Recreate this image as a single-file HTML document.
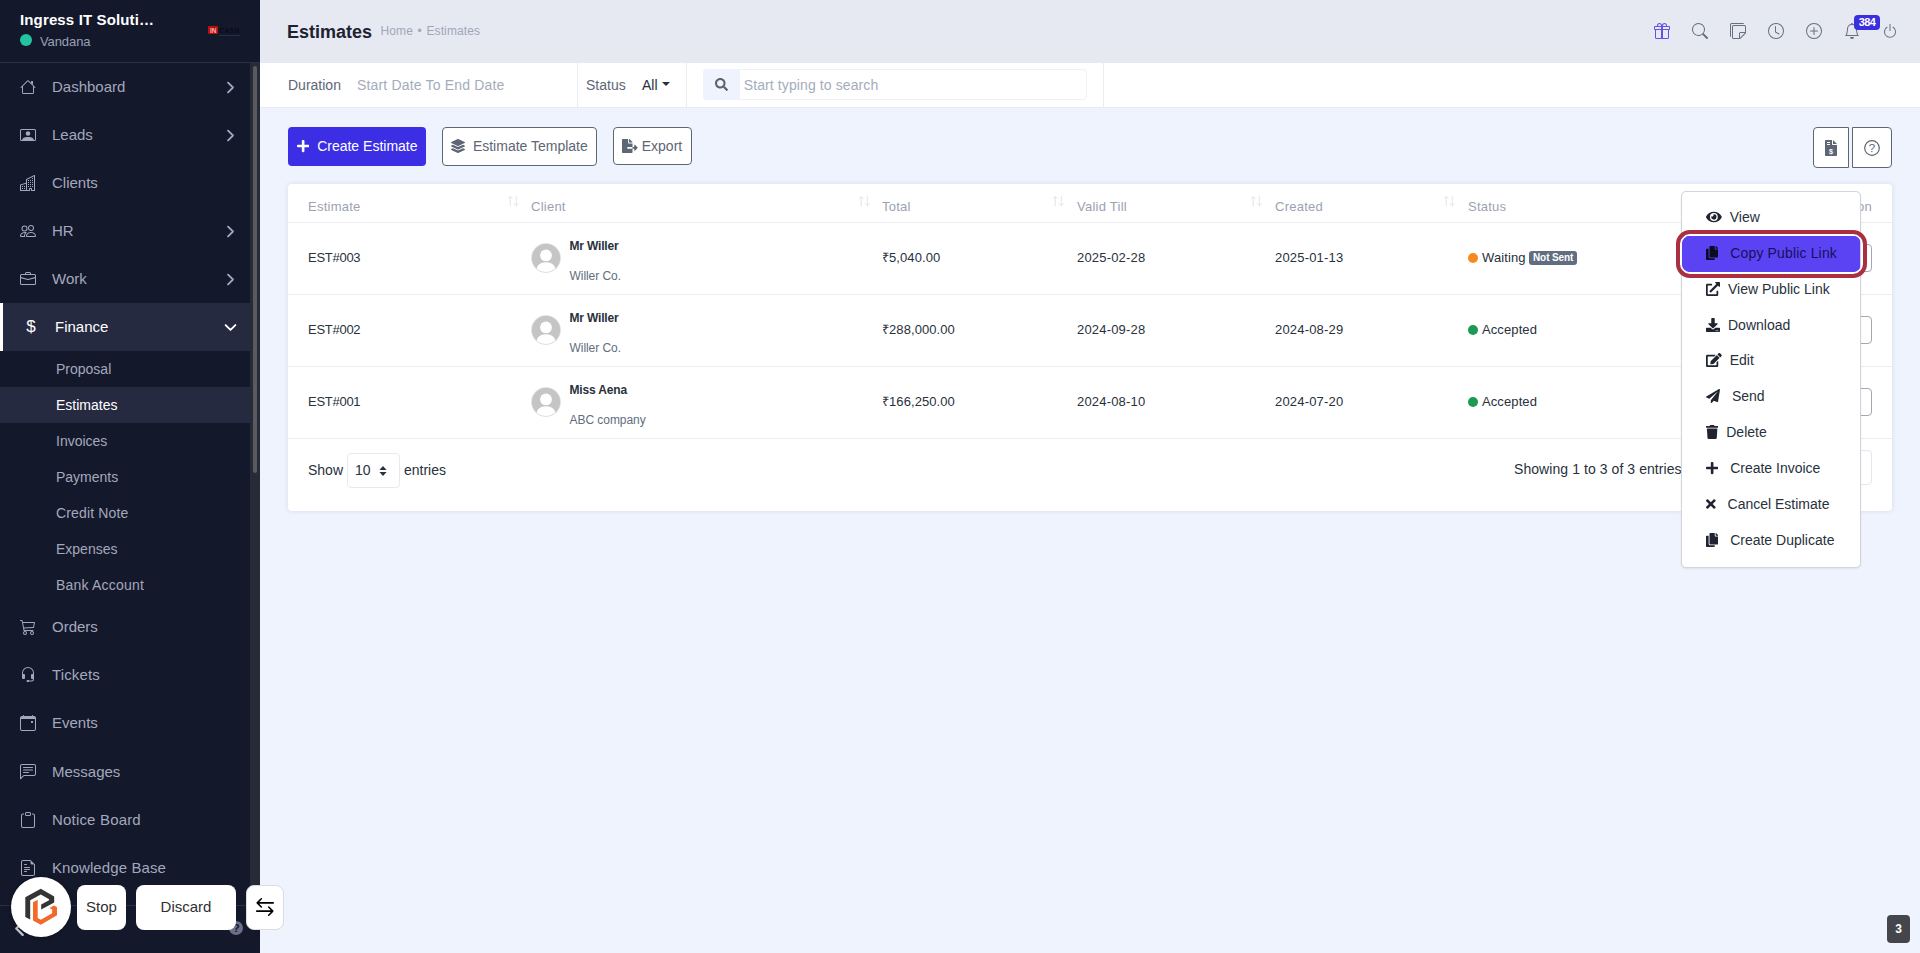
<!DOCTYPE html>
<html lang="en">
<head>
<meta charset="utf-8">
<title>Estimates</title>
<style>
*{box-sizing:border-box;margin:0;padding:0}
html,body{width:1920px;height:953px;overflow:hidden}
body{font-family:"Liberation Sans",Arial,sans-serif;font-size:14px;color:#28313c;background:#eef3fd;position:relative}
.abs{position:absolute}
svg{display:block}
/* ---------- sidebar ---------- */
#sidebar{position:absolute;left:0;top:0;width:260px;height:953px;background:#14182b;color:#a3a8bd}
#sb-head{position:absolute;left:0;top:0;width:260px;height:63px;border-bottom:1px solid #2b3042}
#sb-head .co{position:absolute;left:20px;top:9.6px;font-size:15px;font-weight:700;color:#fff;white-space:nowrap;line-height:20px;letter-spacing:.14px}
#sb-head .dot{position:absolute;left:20px;top:34px;width:12px;height:12px;border-radius:50%;background:#22c3a0}
#sb-head .us{position:absolute;left:40px;top:34px;font-size:13px;line-height:16px;color:#99a0b6;letter-spacing:-.1px}
#sb-head .logo{position:absolute;left:208px;top:24px;width:32px;height:12px;font-size:6px;font-weight:700;line-height:8px;white-space:nowrap}
#sb-head .logo b{position:absolute;left:.3px;top:1.500px;width:9.800px;height:8.800px;background:#b51111;color:#f3b3b3;text-align:center;font-size:6.500px;line-height:9px;border-radius:1px}
#sb-head .logo i{position:absolute;left:11.200px;top:2.500px;font-style:normal;color:#070a1a;letter-spacing:.5px;font-size:6.500px}
#sb-head .logo u{position:absolute;left:10.500px;top:10.800px;width:21.500px;height:1px;background:#292d43}
#sb-track{position:absolute;left:250px;top:63px;width:10px;height:842px;background:#272b38}
#sb-thumb{position:absolute;left:252.700px;top:66px;width:4.300px;height:407px;border-radius:3px;background:#5b5b5f}
.mi{position:absolute;left:0;width:250px;height:48px;font-size:15px;line-height:48px;color:#a3a8bd}
.mi .ic{position:absolute;left:20px;top:16px;width:16px;height:16px}
.mi .tx{position:absolute;left:52px;top:0;white-space:nowrap}
.mi .ch{position:absolute;left:223.5px;top:17.5px;width:13px;height:13px;stroke:currentColor;stroke-width:1.300px}
.mi.act{background:#262a41;color:#fff;border-left:3px solid #fff}
.mi.act .ic{left:20px}
.mi.act .tx{left:52px}
.mi.act .ch{left:220.5px}
.si{position:absolute;left:0;width:250px;height:36px;font-size:14px;line-height:36px;color:#a3a8bd;padding-left:56px;white-space:nowrap}
.si.act{background:#262a41;color:#fff}
#sb-foot{position:absolute;left:0;top:905px;width:260px;height:48px;border-top:1px solid #2b3042;background:#14182b}
.mi .dl{font-size:17px;line-height:16px;text-align:center;width:16px;left:20px !important;top:16px}
#sb-foot .fl{position:absolute;left:11px;top:14px;width:17px;height:17px;color:#c3c7d4;stroke:currentColor;stroke-width:1.2px}
#sb-foot .fq{position:absolute;left:229.300px;top:15.200px;width:14px;height:14px;border-radius:50%;background:#6b7086;color:#14182b;font-size:11px;font-weight:700;line-height:14px;text-align:center}
/* ---------- header ---------- */
#hdr{position:absolute;left:260px;top:0;width:1660px;height:63px;background:#e7e9f2}
#hdr h1{position:absolute;left:27px;top:20px;font-size:18px;line-height:24px;font-weight:700;color:#1d2230}
#hdr .bc{position:absolute;left:120.500px;top:23px;font-size:12px;line-height:16px;color:#a0a6b8;white-space:nowrap;word-spacing:1.200px;letter-spacing:.1px}
.hi{position:absolute;top:23px;width:16px;height:16px;color:#66707f}
#badge{position:absolute;left:1854px;top:15px;width:26px;height:15px;border-radius:4px;background:#3a2fe0;color:#fff;font-size:11px;font-weight:700;line-height:15px;text-align:center;letter-spacing:-.6px}
/* ---------- filter ---------- */
#flt{position:absolute;left:260px;top:63px;width:1660px;height:45px;background:#fff;border-bottom:1px solid #e8ebf1}
#flt .t{position:absolute;top:0;line-height:44px;font-size:14px;white-space:nowrap}
#flt .v{position:absolute;top:0;width:1px;height:44px;background:#eaedf3}
#srch{position:absolute;left:443px;top:6px;width:384px;height:31px;border:1px solid #f0f1f5;border-radius:4px;background:#fff}
#srch .a{position:absolute;left:-1px;top:-1px;width:37px;height:31px;background:#eef3fd;border-radius:4px 0 0 4px}
#srch .ph{position:absolute;left:39.800px;top:0;line-height:30px;font-size:14px;color:#a4acbb;white-space:nowrap;letter-spacing:.1px}
#flt .caret{position:absolute;top:19px;width:0;height:0;border-left:4px solid transparent;border-right:4px solid transparent;border-top:4px solid #28313c}
/* ---------- buttons ---------- */
.btn{position:absolute;height:39px;border-radius:4px;font-size:14px;line-height:39px;white-space:nowrap}
.btn-p{background:#3b2ee4;color:#fff}
.btn-s{background:#fff;border:1px solid #5d6675;color:#5d6675;line-height:37px}
/* ---------- table ---------- */
#card{position:absolute;left:288px;top:184px;width:1604px;height:327px;background:#fff;border-radius:4px;box-shadow:0 0 4px rgba(180,190,215,.45)}
.th{position:absolute;top:15px;font-size:13px;line-height:16px;color:#9ba2b2;white-space:nowrap;letter-spacing:.25px}
.so{position:absolute;top:10px;width:13px;height:14px;color:#dfe2e8;font-size:11px}
.hl{position:absolute;left:0;width:1604px;height:1px;background:#eceef2}
.td{position:absolute;font-size:13px;line-height:16px;color:#28313c;white-space:nowrap}
.av{position:absolute;left:243px;width:30px;height:30px;border-radius:50%;background:#c6c6c6;overflow:hidden;border:1px solid #e4e4e4}
.nm{position:absolute;left:281.500px;font-size:12px;font-weight:700;line-height:16px;color:#28313c;white-space:nowrap;letter-spacing:-.17px}
.cp{position:absolute;left:281.500px;font-size:12px;line-height:16px;color:#616e80;white-space:nowrap;letter-spacing:-.05px}
.sd{position:absolute;left:1180px;width:10px;height:10px;border-radius:50%}
.ab{position:absolute;left:1548px;width:36px;height:28px;border:1px solid #a3a7ae;border-radius:4px;background:#fff}
.ns{position:absolute;left:1241px;height:14px;padding:0 4px;border-radius:3px;background:#616e80;color:#fff;font-size:10px;font-weight:700;line-height:14px;white-space:nowrap;letter-spacing:-.1px}
.ab i{position:absolute;left:21px;width:3px;height:3px;border-radius:50%;background:#616e80}
.ab i:nth-child(1){top:7px}.ab i:nth-child(2){top:11.600px}.ab i:nth-child(3){top:16.200px}
.ft{position:absolute;top:276px;font-size:14px;line-height:20px;color:#28313c;white-space:nowrap}
.sel{position:absolute;left:59px;top:269px;width:53px;height:35px;border:1px solid #e8eaef;border-radius:4px;background:#fff}
.sel span{position:absolute;left:7px;top:0;line-height:33px;font-size:14px;color:#28313c}
.sel svg{position:absolute;left:31px;top:11.500px;width:8px;height:10px}
.pg{position:absolute;left:1500px;top:266px;width:84px;height:35px;border:1px solid #e4e7ec;border-radius:4px;background:#fff}
/* ---------- dropdown ---------- */
#dd{position:absolute;left:1680.500px;top:191px;width:180.300px;height:377.200px;background:#fff;border:1px solid #d2d4da;border-radius:5px;box-shadow:0 1px 2px rgba(60,70,100,.10)}
.di{position:absolute;left:0;width:178px;height:36px;padding-left:24.500px;font-size:14px;line-height:36px;color:#28313c;white-space:nowrap}
.di svg{display:inline-block;height:14px;margin-right:8px;vertical-align:-2px;fill:#1f2430}
.di.hot{color:#17105c;letter-spacing:.15px}
.hotbg{position:absolute;left:0;top:44.300px;width:178.300px;height:35.500px;background:#5b43f3}
.hotring{position:absolute;left:-5.500px;top:38px;width:190.500px;height:47.600px;border:4px solid #a92f41;border-radius:14px;box-shadow:inset 0 0 0 1.800px #fff}
.di.hot svg{fill:#0c0b22}
/* ---------- overlay ---------- */
.ov{position:absolute;background:#fff;border-radius:8px;font-size:15px;color:#2f2f33;text-align:center;line-height:43px;height:45px;top:885px}
#fab{position:absolute;left:11px;top:877px;width:60px;height:60px;border-radius:50%;background:#fff;box-shadow:0 0 4px rgba(0,0,0,.4)}
#cnt{position:absolute;left:1887px;top:915px;width:23px;height:28px;border-radius:4px;background:#45464b;color:#fff;font-size:12px;font-weight:700;line-height:28px;text-align:center}
</style>
</head>
<body>
<!--MAIN-->
<div id="hdr"><h1>Estimates</h1><div class="bc">Home • Estimates</div></div>
<svg class="hi" style="left:1654px;color:#6a4fe3" viewBox="0 0 16 16" fill="currentColor"><path d="M3 2.500a2.500 2.500 0 0 1 5 0 2.500 2.500 0 0 1 5 0v.006c0 .070 0 .270-.038.494H15a1 1 0 0 1 1 1v2a1 1 0 0 1-1 1v7.500a1.500 1.500 0 0 1-1.500 1.500h-11A1.500 1.500 0 0 1 1 14.500V7a1 1 0 0 1-1-1V4a1 1 0 0 1 1-1h2.038A2.968 2.968 0 0 1 3 2.506V2.500zm1.068.500H7v-.500a1.500 1.500 0 1 0-3 0c0 .085.002.274.045.430a.522.522 0 0 0 .023.070zM9 3h2.932a.560.560 0 0 0 .023-.070c.043-.156.045-.345.045-.430a1.500 1.500 0 0 0-3 0V3zM1 4v2h6V4H1zm8 0v2h6V4H9zm5 3H9v8h4.500a.500.500 0 0 0 .500-.500V7zm-7 8V7H2v7.500a.500.500 0 0 0 .500.500H7z"/></svg>
<svg class="hi" style="left:1692px;" viewBox="0 0 16 16" fill="currentColor"><path d="M11.742 10.344a6.500 6.500 0 1 0-1.397 1.398h-.001c.030.040.062.078.098.115l3.850 3.850a1 1 0 0 0 1.415-1.414l-3.850-3.850a1.007 1.007 0 0 0-.115-.100zM12 6.500a5.500 5.500 0 1 1-11 0 5.500 5.500 0 0 1 11 0z"/></svg>
<svg class="hi" style="left:1730px;" viewBox="0 0 16 16" fill="currentColor"><path d="M1.500 0A1.500 1.500 0 0 0 0 1.500V13a1 1 0 0 0 1 1V1.500a.500.500 0 0 1 .500-.500H14a1 1 0 0 0-1-1H1.500z"/><path d="M3.500 2A1.500 1.500 0 0 0 2 3.500v11A1.500 1.500 0 0 0 3.500 16h6.086a1.500 1.500 0 0 0 1.060-.440l4.915-4.914A1.500 1.500 0 0 0 16 9.586V3.500A1.500 1.500 0 0 0 14.500 2h-11zM3 3.500a.500.500 0 0 1 .500-.500h11a.500.500 0 0 1 .500.500V9h-4.500A1.500 1.500 0 0 0 9 10.500V15H3.500a.500.500 0 0 1-.500-.500v-11zm7 11.293V10.500a.500.500 0 0 1 .500-.500h4.293L10 14.793z"/></svg>
<svg class="hi" style="left:1768px;" viewBox="0 0 16 16" fill="currentColor"><path d="M8 3.500a.500.500 0 0 0-1 0V9a.500.500 0 0 0 .252.434l3.500 2a.500.500 0 0 0 .496-.868L8 8.710V3.500z"/><path d="M8 16A8 8 0 1 0 8 0a8 8 0 0 0 0 16zm7-8A7 7 0 1 1 1 8a7 7 0 0 1 14 0z"/></svg>
<svg class="hi" style="left:1806px;" viewBox="0 0 16 16" fill="currentColor"><path d="M8 15A7 7 0 1 1 8 1a7 7 0 0 1 0 14zm0 1A8 8 0 1 0 8 0a8 8 0 0 0 0 16z"/><path d="M8 4a.500.500 0 0 1 .500.500v3h3a.500.500 0 0 1 0 1h-3v3a.500.500 0 0 1-1 0v-3h-3a.500.500 0 0 1 0-1h3v-3A.500.500 0 0 1 8 4z"/></svg>
<svg class="hi" style="left:1844px;" viewBox="0 0 16 16" fill="currentColor"><path d="M8 16a2 2 0 0 0 2-2H6a2 2 0 0 0 2 2zM8 1.918l-.797.161A4.002 4.002 0 0 0 4 6c0 .628-.134 2.197-.459 3.742-.160.767-.376 1.566-.663 2.258h10.244c-.287-.692-.502-1.490-.663-2.258C12.134 8.197 12 6.628 12 6a4.002 4.002 0 0 0-3.203-3.920L8 1.917zM14.220 12c.223.447.481.801.780 1H1c.299-.199.557-.553.780-1C2.680 10.200 3 6.880 3 6c0-2.420 1.720-4.440 4.005-4.901a1 1 0 1 1 1.990 0A5.002 5.002 0 0 1 13 6c0 .880.320 4.200 1.220 6z"/></svg>
<svg class="hi" style="left:1882px;" viewBox="0 0 16 16" fill="currentColor"><path d="M7.500 1v7h1V1h-1z"/><path d="M3 8.812a4.999 4.999 0 0 1 2.578-4.375l-.485-.874A6 6 0 1 0 11 3.616l-.501.865A5 5 0 1 1 3 8.812z"/></svg>
<div id="badge">384</div>
<div id="flt">
<span class="t" style="left:28px;color:#5d6675">Duration</span>
<span class="t" style="left:97px;color:#a4acbb;letter-spacing:.17px">Start Date To End Date</span>
<i class="v" style="left:317px"></i>
<span class="t" style="left:326px;color:#5d6675">Status</span>
<span class="t" style="left:382px;color:#28313c">All</span>
<i class="caret" style="left:402px"></i>
<i class="v" style="left:426px"></i>
<div id="srch"><div class="a"><svg viewBox="0 0 512 512" style="width:13.000px;height:13px;position:absolute;left:12px;top:9px;color:#596173" fill="currentColor"><path d="M505 442.700L405.300 343c-4.500-4.500-10.600-7-17-7H372c27.600-35.300 44-79.700 44-128C416 93.100 322.900 0 208 0S0 93.100 0 208s93.100 208 208 208c48.300 0 92.700-16.400 128-44v16.300c0 6.400 2.500 12.500 7 17l99.700 99.700c9.400 9.400 24.600 9.400 33.900 0l28.300-28.300c9.400-9.400 9.400-24.600.100-34zM208 336c-70.700 0-128-57.200-128-128 0-70.700 57.200-128 128-128 70.700 0 128 57.200 128 128 0 70.700-57.200 128-128 128z"/></svg></div><span class="ph">Start typing to search</span></div>
<i class="v" style="left:843px"></i>
</div>
<div class="btn btn-p" style="left:288px;top:127px;width:138px;padding-left:9px"><svg viewBox="0 0 448 512" style="width:12.250px;height:14px;display:inline-block;vertical-align:-2px;margin-right:4px" fill="currentColor"><path d="M416 208H272V64c0-17.670-14.330-32-32-32h-32c-17.670 0-32 14.330-32 32v144H32c-17.670 0-32 14.330-32 32v32c0 17.670 14.330 32 32 32h144v144c0 17.670 14.330 32 32 32h32c17.670 0 32-14.330 32-32V304h144c17.670 0 32-14.330 32-32v-32c0-17.670-14.330-32-32-32z"/></svg> Create Estimate</div>
<div class="btn btn-s" style="left:442px;top:127px;width:155px;padding-left:8px"><svg viewBox="0 0 512 512" style="width:14.000px;height:14px;display:inline-block;vertical-align:-2px;margin-right:4px" fill="currentColor"><path d="M12.410 148.020l232.940 105.670c6.800 3.090 14.490 3.090 21.290 0l232.940-105.670c16.550-7.510 16.550-32.520 0-40.030L266.650 2.310a25.607 25.607 0 0 0-21.290 0L12.410 107.980c-16.550 7.510-16.550 32.530 0 40.040zm487.180 88.280l-58.090-26.330-161.640 73.270c-7.560 3.430-15.590 5.170-23.860 5.170s-16.290-1.740-23.860-5.170L70.510 209.970l-58.100 26.330c-16.550 7.500-16.550 32.500 0 40l232.940 105.590c6.800 3.080 14.490 3.080 21.290 0L499.590 276.300c16.550-7.500 16.550-32.500 0-40zm0 127.800l-57.870-26.230-161.860 73.370c-7.560 3.430-15.590 5.170-23.860 5.170s-16.290-1.740-23.860-5.170L70.290 337.870 12.410 364.100c-16.550 7.500-16.550 32.500 0 40l232.940 105.590c6.800 3.080 14.490 3.080 21.290 0L499.590 404.100c16.550-7.500 16.550-32.500 0-40z"/></svg> Estimate Template</div>
<div class="btn btn-s" style="left:613px;top:127px;width:79px;height:38px;line-height:36px;padding-left:8px"><svg viewBox="0 0 576 512" style="width:15.750px;height:14px;display:inline-block;vertical-align:-2px;margin-right:4px" fill="currentColor"><path d="M384 121.900c0-6.300-2.500-12.400-7-16.900L279.100 7c-4.500-4.500-10.600-7-17-7H256v128h128zM571 308l-95.700-96.400c-10.100-10.100-27.400-3-27.400 11.300V288h-64v64h64v65.200c0 14.300 17.300 21.400 27.400 11.300L571 332c6.600-6.600 6.600-17.400 0-24zm-379 28v-32c0-8.800 7.200-16 16-16h176V160H248c-13.200 0-24-10.800-24-24V0H24C10.700 0 0 10.700 0 24v464c0 13.300 10.700 24 24 24h336c13.300 0 24-10.700 24-24V352H208c-8.800 0-16-7.200-16-16z"/></svg>Export</div>
<div class="btn btn-s" style="left:1813px;top:127px;width:36px;height:41px;border-radius:4px 0 0 4px"><svg viewBox="0 0 384 512" style="position:absolute;left:11px;top:12px;width:12px;height:16px" fill="currentColor"><path fill-rule="evenodd" d="M224 0H24C10.700 0 0 10.700 0 24v464c0 13.300 10.700 24 24 24h336c13.300 0 24-10.700 24-24V160H248c-13.200 0-24-10.800-24-24V0zM64 72c0-4.400 3.600-8 8-8h80c4.400 0 8 3.600 8 8v16c0 4.400-3.600 8-8 8H72c-4.400 0-8-3.600-8-8V72zm0 64c0-4.400 3.600-8 8-8h80c4.400 0 8 3.600 8 8v16c0 4.400-3.600 8-8 8H72c-4.400 0-8-3.600-8-8v-16zM256 0v128h128L256 0z"/><text x="192" y="440" font-size="230" font-weight="700" text-anchor="middle" fill="#fff" font-family="Liberation Sans,sans-serif">$</text></svg></div>
<div class="btn btn-s" style="left:1852px;top:127px;width:40px;height:41px;border-radius:0 4px 4px 0"><svg viewBox="0 0 16 16" style="position:absolute;left:11px;top:12px;width:16px;height:16px"><circle cx="8" cy="8" r="7.300" fill="none" stroke="currentColor" stroke-width="1.200"/><text x="8" y="12" font-size="11.500" font-weight="400" text-anchor="middle" fill="currentColor" font-family="Liberation Sans,sans-serif">?</text></svg></div>
<div id="card">
<span class="th" style="left:20px">Estimate</span>
<svg class="so" style="left:219px" viewBox="0 0 14 13" fill="none" stroke="currentColor" stroke-width="1"><path d="M3.500 12V1.500M1 4l2.500-2.500L6 4M10 1v10.500M7.500 9l2.500 2.500L12.500 9"/></svg>
<span class="th" style="left:243px">Client</span>
<svg class="so" style="left:570px" viewBox="0 0 14 13" fill="none" stroke="currentColor" stroke-width="1"><path d="M3.500 12V1.500M1 4l2.500-2.500L6 4M10 1v10.500M7.500 9l2.500 2.500L12.500 9"/></svg>
<span class="th" style="left:594px">Total</span>
<svg class="so" style="left:764px" viewBox="0 0 14 13" fill="none" stroke="currentColor" stroke-width="1"><path d="M3.500 12V1.500M1 4l2.500-2.500L6 4M10 1v10.500M7.500 9l2.500 2.500L12.500 9"/></svg>
<span class="th" style="left:789px">Valid Till</span>
<svg class="so" style="left:962px" viewBox="0 0 14 13" fill="none" stroke="currentColor" stroke-width="1"><path d="M3.500 12V1.500M1 4l2.500-2.500L6 4M10 1v10.500M7.500 9l2.500 2.500L12.500 9"/></svg>
<span class="th" style="left:987px">Created</span>
<svg class="so" style="left:1155px" viewBox="0 0 14 13" fill="none" stroke="currentColor" stroke-width="1"><path d="M3.500 12V1.500M1 4l2.500-2.500L6 4M10 1v10.500M7.500 9l2.500 2.500L12.500 9"/></svg>
<span class="th" style="left:1180px">Status</span>
<span class="th" style="right:20px">Action</span>
<i class="hl" style="top:38px"></i>
<i class="hl" style="top:110px"></i>
<i class="hl" style="top:182px"></i>
<i class="hl" style="top:254px"></i>
<span class="td" style="left:20px;top:66px;letter-spacing:-.27px">EST#003</span>
<div class="av" style="top:59px"><svg viewBox="0 0 30 30" width="28" height="28"><rect width="30" height="30" fill="#c5c5c5"/><circle cx="15" cy="12.300" r="6.300" fill="#fff"/><path d="M4.500 30c0-7.500 4.500-10.500 10.500-10.500S25.500 22.500 25.500 30z" fill="#fff"/></svg></div>
<span class="nm" style="top:54px">Mr Willer</span>
<span class="cp" style="top:84px">Willer Co.</span>
<span class="td" style="left:594px;top:66px;letter-spacing:.07px">₹5,040.00</span>
<span class="td" style="left:789px;top:66px;letter-spacing:.18px">2025-02-28</span>
<span class="td" style="left:987px;top:66px;letter-spacing:.18px">2025-01-13</span>
<i class="sd" style="top:68.5px;background:#f58a1f"></i>
<span class="td" style="left:1194px;top:66px;letter-spacing:.1px">Waiting</span>
<span class="ns" style="top:67px">Not Sent</span>
<div class="ab" style="top:60.3px"><i></i><i></i><i></i></div>
<span class="td" style="left:20px;top:138px;letter-spacing:-.27px">EST#002</span>
<div class="av" style="top:131px"><svg viewBox="0 0 30 30" width="28" height="28"><rect width="30" height="30" fill="#c5c5c5"/><circle cx="15" cy="12.300" r="6.300" fill="#fff"/><path d="M4.500 30c0-7.500 4.500-10.500 10.500-10.500S25.500 22.500 25.500 30z" fill="#fff"/></svg></div>
<span class="nm" style="top:126px">Mr Willer</span>
<span class="cp" style="top:156px">Willer Co.</span>
<span class="td" style="left:594px;top:138px;letter-spacing:.07px">₹288,000.00</span>
<span class="td" style="left:789px;top:138px;letter-spacing:.18px">2024-09-28</span>
<span class="td" style="left:987px;top:138px;letter-spacing:.18px">2024-08-29</span>
<i class="sd" style="top:140.5px;background:#1a9b51"></i>
<span class="td" style="left:1194px;top:138px;letter-spacing:.1px">Accepted</span>
<div class="ab" style="top:132.3px"><i></i><i></i><i></i></div>
<span class="td" style="left:20px;top:210px;letter-spacing:-.27px">EST#001</span>
<div class="av" style="top:203px"><svg viewBox="0 0 30 30" width="28" height="28"><rect width="30" height="30" fill="#c5c5c5"/><circle cx="15" cy="12.300" r="6.300" fill="#fff"/><path d="M4.500 30c0-7.500 4.500-10.500 10.500-10.500S25.500 22.500 25.500 30z" fill="#fff"/></svg></div>
<span class="nm" style="top:198px">Miss Aena</span>
<span class="cp" style="top:228px">ABC company</span>
<span class="td" style="left:594px;top:210px;letter-spacing:.07px">₹166,250.00</span>
<span class="td" style="left:789px;top:210px;letter-spacing:.18px">2024-08-10</span>
<span class="td" style="left:987px;top:210px;letter-spacing:.18px">2024-07-20</span>
<i class="sd" style="top:212.5px;background:#1a9b51"></i>
<span class="td" style="left:1194px;top:210px;letter-spacing:.1px">Accepted</span>
<div class="ab" style="top:204.3px"><i></i><i></i><i></i></div>
<span class="ft" style="left:20px">Show</span><div class="sel"><span>10</span><svg viewBox="0 0 8 10" fill="#28313c"><path d="M4 0l3.600 4H.400zM4 10L.400 6h7.200z"/></svg></div><span class="ft" style="left:116px">entries</span>
<span class="ft" style="left:1226px;letter-spacing:.07px;top:275px">Showing 1 to 3 of 3 entries</span>
<div class="pg"></div>
</div>
<!--SIDEBAR-->
<div id="sidebar">
<div id="sb-head"><div class="co">Ingress IT Soluti…</div><div class="dot"></div><div class="us">Vandana</div><div class="logo"><b>IN</b><i>CASH</i><u></u></div></div>
<div id="sb-track"></div><div id="sb-thumb"></div>
<div class="mi" style="top:63px"><svg class="ic" viewBox="0 0 16 16" fill="currentColor" ><path fill-rule="evenodd" d="M2 13.5V7h1v6.5a.5.5 0 0 0 .5.5h9a.5.5 0 0 0 .5-.5V7h1v6.5a1.5 1.5 0 0 1-1.5 1.5h-9A1.5 1.5 0 0 1 2 13.5zm11-11V6l-2-2V2.5a.5.5 0 0 1 .5-.5h1a.5.5 0 0 1 .5.5z"/><path fill-rule="evenodd" d="M7.293 1.5a1 1 0 0 1 1.414 0l6.647 6.646a.5.5 0 0 1-.708.708L8 2.207 1.354 8.854a.5.5 0 1 1-.708-.708L7.293 1.5z"/></svg><span class="tx">Dashboard</span><svg class="ch" viewBox="0 0 16 16" fill="currentColor" ><path fill-rule="evenodd" d="M4.646 1.646a.5.500 0 0 1 .708 0l6 6a.5.500 0 0 1 0 .708l-6 6a.5.500 0 0 1-.708-.708L10.293 8 4.646 2.354a.5.500 0 0 1 0-.708z"/></svg></div>
<div class="mi" style="top:111px"><svg class="ic" viewBox="0 0 16 16" fill="currentColor" ><path d="M1.5 2A1.5 1.5 0 0 0 0 3.5v9A1.5 1.5 0 0 0 1.5 14h13a1.5 1.5 0 0 0 1.500-1.5v-9A1.5 1.5 0 0 0 14.500 2h-13zM1 3.500a.5.500 0 0 1 .5-.5h13a.5.500 0 0 1 .5.500v9a.5.500 0 0 1-.5.500h-.6c-.3-1.700-2.100-3-4.900-3h-2c-2.800 0-4.600 1.300-4.900 3H1.500a.5.500 0 0 1-.5-.5v-9z"/><circle cx="8" cy="6.500" r="2.300"/></svg><span class="tx">Leads</span><svg class="ch" viewBox="0 0 16 16" fill="currentColor" ><path fill-rule="evenodd" d="M4.646 1.646a.5.500 0 0 1 .708 0l6 6a.5.500 0 0 1 0 .708l-6 6a.5.500 0 0 1-.708-.708L10.293 8 4.646 2.354a.5.500 0 0 1 0-.708z"/></svg></div>
<div class="mi" style="top:159px"><svg class="ic" viewBox="0 0 16 16" fill="currentColor" ><path fill-rule="evenodd" d="M14.763.075A.5.5 0 0 1 15 .5v15a.5.5 0 0 1-.5.5h-3a.5.5 0 0 1-.5-.5V14h-1v1.500a.5.5 0 0 1-.5.5h-9a.5.5 0 0 1-.5-.5V10a.5.5 0 0 1 .342-.474L6 7.640V4.500a.5.5 0 0 1 .276-.447l8-4a.5.5 0 0 1 .487.022zM6 8.694 1 10.360V15h5V8.694zM7 15h2v-1.500a.5.5 0 0 1 .5-.5h2a.5.5 0 0 1 .5.500V15h2V1.309l-7 3.500V15z"/><path d="M2 11h1v1H2v-1zm2 0h1v1H4v-1zm-2 2h1v1H2v-1zm2 0h1v1H4v-1zm4-4h1v1H8V9zm2 0h1v1h-1V9zm-2 2h1v1H8v-1zm2 0h1v1h-1v-1zm2-2h1v1h-1V9zm0 2h1v1h-1v-1zM8 7h1v1H8V7zm2 0h1v1h-1V7zm2 0h1v1h-1V7zM8 5h1v1H8V5zm2 0h1v1h-1V5zm2 0h1v1h-1V5zm0-2h1v1h-1V3z"/></svg><span class="tx">Clients</span></div>
<div class="mi" style="top:207px"><svg class="ic" viewBox="0 0 16 16" fill="currentColor" ><path d="M15 14s1 0 1-1-1-4-5-4-5 3-5 4 1 1 1 1h8zm-7.978-1A.261.261 0 0 1 7 12.996c.001-.264.167-1.030.760-1.720C8.312 10.629 9.282 10 11 10c1.717 0 2.687.630 3.240 1.276.593.690.758 1.457.760 1.720l-.008.002a.274.274 0 0 1-.014.002H7.022zM11 7a2 2 0 1 0 0-4 2 2 0 0 0 0 4zm3-2a3 3 0 1 1-6 0 3 3 0 0 1 6 0zM6.936 9.280a5.880 5.880 0 0 0-1.230-.247A7.350 7.350 0 0 0 5 9c-4 0-5 3-5 4 0 .667.333 1 1 1h4.216A2.238 2.238 0 0 1 5 13c0-1.010.377-2.042 1.090-2.904.243-.294.526-.569.846-.816zM4.920 10A5.493 5.493 0 0 0 4 13H1c0-.260.164-1.030.760-1.724.545-.636 1.492-1.256 3.160-1.275zM1.500 5.500a3 3 0 1 1 6 0 3 3 0 0 1-6 0zm3-2a2 2 0 1 0 0 4 2 2 0 0 0 0-4z"/></svg><span class="tx">HR</span><svg class="ch" viewBox="0 0 16 16" fill="currentColor" ><path fill-rule="evenodd" d="M4.646 1.646a.5.500 0 0 1 .708 0l6 6a.5.500 0 0 1 0 .708l-6 6a.5.500 0 0 1-.708-.708L10.293 8 4.646 2.354a.5.500 0 0 1 0-.708z"/></svg></div>
<div class="mi" style="top:255px"><svg class="ic" viewBox="0 0 16 16" fill="currentColor" ><path d="M6.500 1A1.500 1.500 0 0 0 5 2.500V3H1.500A1.500 1.500 0 0 0 0 4.500v8A1.500 1.500 0 0 0 1.500 14h13a1.500 1.500 0 0 0 1.500-1.500v-8A1.500 1.500 0 0 0 14.500 3H11v-.5A1.500 1.500 0 0 0 9.500 1h-3zm0 1h3a.5.500 0 0 1 .5.500V3H6v-.5a.5.500 0 0 1 .5-.5zm1.886 6.914L15 7.151V12.500a.5.500 0 0 1-.5.500h-13a.5.500 0 0 1-.5-.5V7.150l6.614 1.764a1.500 1.500 0 0 0 .772 0zM1.500 4h13a.5.500 0 0 1 .5.500v1.616L8.129 7.948a.5.500 0 0 1-.258 0L1 6.116V4.500a.5.500 0 0 1 .5-.5z"/></svg><span class="tx">Work</span><svg class="ch" viewBox="0 0 16 16" fill="currentColor" ><path fill-rule="evenodd" d="M4.646 1.646a.5.500 0 0 1 .708 0l6 6a.5.500 0 0 1 0 .708l-6 6a.5.500 0 0 1-.708-.708L10.293 8 4.646 2.354a.5.500 0 0 1 0-.708z"/></svg></div>
<div class="mi act" style="top:303px"><span class="ic dl">$</span><span class="tx">Finance</span><svg class="ch" viewBox="0 0 16 16" fill="currentColor" ><path fill-rule="evenodd" d="M1.646 4.646a.5.500 0 0 1 .708 0L8 10.293l5.646-5.647a.5.500 0 0 1 .708.708l-6 6a.5.500 0 0 1-.708 0l-6-6a.5.500 0 0 1 0-.708z"/></svg></div>
<div class="si" style="top:351px;letter-spacing:0px">Proposal</div>
<div class="si act" style="top:387px;letter-spacing:0px">Estimates</div>
<div class="si" style="top:423px;letter-spacing:0px">Invoices</div>
<div class="si" style="top:459px;letter-spacing:0px">Payments</div>
<div class="si" style="top:495px;letter-spacing:0.15px">Credit Note</div>
<div class="si" style="top:531px;letter-spacing:0px">Expenses</div>
<div class="si" style="top:567px;letter-spacing:0.2px">Bank Account</div>
<div class="mi" style="top:603px;letter-spacing:0px"><svg class="ic" viewBox="0 0 16 16" fill="currentColor" ><path d="M0 1.500A.5.500 0 0 1 .5 1H2a.5.500 0 0 1 .485.379L2.890 3H14.500a.5.500 0 0 1 .490.598l-1 5a.5.500 0 0 1-.465.401l-9.397.472L4.415 11H13a.5.500 0 0 1 0 1H4a.5.500 0 0 1-.491-.408L2.010 3.607 1.610 2H.5a.5.500 0 0 1-.5-.5zM3.102 4l.840 4.479 9.144-.459L13.890 4H3.102zM5 12a2 2 0 1 0 0 4 2 2 0 0 0 0-4zm7 0a2 2 0 1 0 0 4 2 2 0 0 0 0-4zm-7 1a1 1 0 1 1 0 2 1 1 0 0 1 0-2zm7 0a1 1 0 1 1 0 2 1 1 0 0 1 0-2z"/></svg><span class="tx">Orders</span></div>
<div class="mi" style="top:651px;letter-spacing:0.14px"><svg class="ic" viewBox="0 0 16 16" fill="currentColor" ><path d="M8 1a5 5 0 0 0-5 5v1h1a1 1 0 0 1 1 1v3a1 1 0 0 1-1 1H3a1 1 0 0 1-1-1V6a6 6 0 1 1 12 0v6a2.500 2.500 0 0 1-2.500 2.500H9.366a1 1 0 0 1-.866.500h-1a1 1 0 1 1 0-2h1a1 1 0 0 1 .866.500H11.500A1.500 1.500 0 0 0 13 12h-1a1 1 0 0 1-1-1V8a1 1 0 0 1 1-1h1V6a5 5 0 0 0-5-5z"/></svg><span class="tx">Tickets</span></div>
<div class="mi" style="top:699px;letter-spacing:0px"><svg class="ic" viewBox="0 0 16 16" fill="currentColor" ><path d="M11 6.500a.5.500 0 0 1 .5-.5h1a.5.500 0 0 1 .5.500v1a.5.500 0 0 1-.5.500h-1a.5.500 0 0 1-.5-.5v-1z"/><path d="M3.500 0a.5.500 0 0 1 .5.500V1h8V.5a.5.500 0 0 1 1 0V1h1a2 2 0 0 1 2 2v11a2 2 0 0 1-2 2H2a2 2 0 0 1-2-2V3a2 2 0 0 1 2-2h1V.5a.5.500 0 0 1 .5-.5zM1 4v10a1 1 0 0 0 1 1h12a1 1 0 0 0 1-1V4H1z"/></svg><span class="tx">Events</span></div>
<div class="mi" style="top:747.5px;letter-spacing:0px"><svg class="ic" viewBox="0 0 16 16" fill="currentColor" ><path d="M14 1a1 1 0 0 1 1 1v8a1 1 0 0 1-1 1H4.414A2 2 0 0 0 3 11.586l-2 2V2a1 1 0 0 1 1-1h12zM2 0a2 2 0 0 0-2 2v12.793a.5.500 0 0 0 .854.353l2.853-2.853A1 1 0 0 1 4.414 12H14a2 2 0 0 0 2-2V2a2 2 0 0 0-2-2H2z"/><path d="M3 3.500a.5.500 0 0 1 .5-.5h9a.5.500 0 0 1 0 1h-9a.5.500 0 0 1-.5-.5zM3 6a.5.500 0 0 1 .5-.5h9a.5.500 0 0 1 0 1h-9A.5.500 0 0 1 3 6zm0 2.500a.5.500 0 0 1 .5-.5h5a.5.500 0 0 1 0 1h-5a.5.500 0 0 1-.5-.5z"/></svg><span class="tx">Messages</span></div>
<div class="mi" style="top:795.5px;letter-spacing:0.18px"><svg class="ic" viewBox="0 0 16 16" fill="currentColor" ><path d="M4 1.500H3a2 2 0 0 0-2 2V14a2 2 0 0 0 2 2h10a2 2 0 0 0 2-2V3.500a2 2 0 0 0-2-2h-1v1h1a1 1 0 0 1 1 1V14a1 1 0 0 1-1 1H3a1 1 0 0 1-1-1V3.500a1 1 0 0 1 1-1h1v-1z"/><path d="M9.500 1a.5.500 0 0 1 .5.500v1a.5.500 0 0 1-.5.500h-3a.5.500 0 0 1-.5-.5v-1a.5.500 0 0 1 .5-.5h3zm-3-1A1.500 1.500 0 0 0 5 1.500v1A1.500 1.500 0 0 0 6.500 4h3A1.500 1.500 0 0 0 11 2.500v-1A1.500 1.500 0 0 0 9.500 0h-3z"/></svg><span class="tx">Notice Board</span></div>
<div class="mi" style="top:843.5px;letter-spacing:0.1px"><svg class="ic" viewBox="0 0 16 16" fill="currentColor" ><path d="M4.500 7a.5.500 0 0 0 0 1h5a.5.500 0 0 0 0-1h-5zM4 9.500a.5.500 0 0 1 .5-.5h5a.5.500 0 0 1 0 1h-5a.5.500 0 0 1-.5-.5zm0 2a.5.500 0 0 1 .5-.5h2a.5.500 0 0 1 0 1h-2a.5.500 0 0 1-.5-.5zm0-7a.5.500 0 0 1 .5-.5h2a.5.500 0 0 1 0 1h-2a.5.500 0 0 1-.5-.5z"/><path d="M10.500 0H3a2 2 0 0 0-2 2v12a2 2 0 0 0 2 2h10a2 2 0 0 0 2-2V4.500L10.500 0zm0 1v2A1.500 1.500 0 0 0 12 4.500h2V14a1 1 0 0 1-1 1H3a1 1 0 0 1-1-1V2a1 1 0 0 1 1-1h7.500z"/></svg><span class="tx">Knowledge Base</span></div>
<div id="sb-foot"><svg class="fl" viewBox="0 0 16 16" fill="currentColor" ><path fill-rule="evenodd" d="M11.354 1.646a.5.500 0 0 1 0 .708L5.707 8l5.647 5.646a.5.500 0 0 1-.708.708l-6-6a.5.500 0 0 1 0-.708l6-6a.5.500 0 0 1 .708 0z"/></svg><span class="fq">?</span></div>
</div>
<!--DROPDOWN-->
<div id="dd">
<div class="hotbg"></div>
<div class="hotring"></div>
<div class="di" style="top:7.00px"><svg viewBox="0 0 576 512" style="width:15.750px"><path d="M572.520 241.400C518.290 135.590 410.930 64 288 64S57.680 135.640 3.480 241.410a32.350 32.350 0 0 0 0 29.190C57.710 376.410 165.070 448 288 448s230.320-71.640 284.520-177.410a32.350 32.350 0 0 0 0-29.190zM288 400a144 144 0 1 1 144-144 143.930 143.930 0 0 1-144 144zm0-240a95.310 95.310 0 0 0-25.310 3.790 47.850 47.850 0 0 1-66.900 66.900A95.780 95.780 0 1 0 288 160z"/></svg>View</div>
<div class="di hot" style="top:43.00px"><svg viewBox="0 0 448 512" style="width:12.250px"><path d="M320 448v40c0 13.255-10.745 24-24 24H24c-13.255 0-24-10.745-24-24V120c0-13.255 10.745-24 24-24h72v296c0 30.879 25.121 56 56 56h168zm0-344V0H152c-13.255 0-24 10.745-24 24v368c0 13.255 10.745 24 24 24h272c13.255 0 24-10.745 24-24V128H344c-13.200 0-24-10.800-24-24zm120.971-31.029L375.029 7.029A24 24 0 0 0 358.059 0H352v96h96v-6.059a24 24 0 0 0-7.029-16.970z"/></svg> Copy Public Link</div>
<div class="di" style="top:79.00px"><svg viewBox="0 0 512 512" style="width:14.000px"><path d="M432 320H400a16 16 0 0 0-16 16V448H64V128H208a16 16 0 0 0 16-16V80a16 16 0 0 0-16-16H48A48 48 0 0 0 0 112V464a48 48 0 0 0 48 48H400a48 48 0 0 0 48-48V336A16 16 0 0 0 432 320ZM488 0h-128c-21.370 0-32.050 25.910-17 41l35.730 35.730L135 320.370a24 24 0 0 0 0 34L157.670 377a24 24 0 0 0 34 0L435.280 133.320 471 169c15 15 41 4.500 41-17V24A24 24 0 0 0 488 0Z"/></svg>View Public Link</div>
<div class="di" style="top:115.00px"><svg viewBox="0 0 512 512" style="width:14.000px"><path d="M216 0h80c13.300 0 24 10.700 24 24v168h87.700c17.800 0 26.700 21.500 14.100 34.100L269.700 378.300c-7.500 7.500-19.800 7.500-27.300 0L90.100 226.100c-12.600-12.600-3.700-34.100 14.100-34.100H192V24c0-13.300 10.700-24 24-24zm296 376v112c0 13.300-10.700 24-24 24H24c-13.300 0-24-10.700-24-24V376c0-13.300 10.700-24 24-24h146.700l49 49c20.100 20.100 52.500 20.100 72.600 0l49-49H488c13.300 0 24 10.700 24 24zm-124 88c0-11-9-20-20-20s-20 9-20 20 9 20 20 20 20-9 20-20zm64 0c0-11-9-20-20-20s-20 9-20 20 9 20 20 20 20-9 20-20z"/></svg>Download</div>
<div class="di" style="top:150.00px"><svg viewBox="0 0 576 512" style="width:15.750px"><path d="M402.600 83.200l90.200 90.200c3.800 3.800 3.800 10 0 13.800L274.400 405.600l-92.800 10.300c-12.400 1.400-22.900-9.100-21.500-21.500l10.300-92.800L388.800 83.200c3.800-3.800 10-3.800 13.800 0zm162-22.900l-48.800-48.800c-15.200-15.200-39.900-15.200-55.200 0l-35.400 35.400c-3.800 3.800-3.800 10 0 13.800l90.200 90.200c3.800 3.800 10 3.800 13.800 0l35.400-35.400c15.200-15.300 15.200-40 0-55.200zM384 346.200V448H64V128h229.800c3.200 0 6.200-1.300 8.500-3.500l40-40c7.600-7.600 2.200-20.500-8.500-20.500H48C21.500 64 0 85.500 0 112v352c0 26.500 21.500 48 48 48h352c26.500 0 48-21.500 48-48V306.200c0-10.700-12.900-16-20.500-8.500l-40 40c-2.200 2.300-3.500 5.300-3.500 8.500z"/></svg>Edit</div>
<div class="di" style="top:186.00px"><svg viewBox="0 0 512 512" style="width:14.000px"><path d="M476 3.200L12.500 270.600c-18.100 10.400-15.800 35.600 2.200 43.200L121 358.400l287.300-253.200c5.500-4.900 13.300 2.600 8.600 8.300L176 407v80.500c0 23.600 28.500 32.900 42.500 15.800L282 426l124.600 52.200c14.200 6 30.400-2.900 33-18.200l72-432C515 7.800 493.300-6.800 476 3.200z"/></svg> Send</div>
<div class="di" style="top:222.00px"><svg viewBox="0 0 448 512" style="width:12.250px"><path d="M432 32H312l-9.400-18.700A24 24 0 0 0 281.100 0H166.800a23.720 23.720 0 0 0-21.400 13.300L136 32H16A16 16 0 0 0 0 48v32a16 16 0 0 0 16 16h416a16 16 0 0 0 16-16V48a16 16 0 0 0-16-16zM53.200 467a48 48 0 0 0 47.900 45h245.800a48 48 0 0 0 47.900-45L416 128H32z"/></svg>Delete</div>
<div class="di" style="top:258.00px"><svg viewBox="0 0 448 512" style="width:12.250px"><path d="M416 208H272V64c0-17.670-14.330-32-32-32h-32c-17.670 0-32 14.330-32 32v144H32c-17.670 0-32 14.330-32 32v32c0 17.670 14.330 32 32 32h144v144c0 17.670 14.330 32 32 32h32c17.670 0 32-14.330 32-32V304h144c17.670 0 32-14.330 32-32v-32c0-17.670-14.330-32-32-32z"/></svg> Create Invoice</div>
<div class="di" style="top:294.00px"><svg viewBox="0 0 352 512" style="width:9.625px"><path d="M242.720 256l100.070-100.070c12.280-12.280 12.280-32.190 0-44.480l-22.240-22.240c-12.280-12.280-32.190-12.280-44.480 0L176 189.280 75.930 89.210c-12.280-12.280-32.190-12.280-44.480 0L9.210 111.450c-12.280 12.280-12.280 32.190 0 44.480L109.280 256 9.210 356.070c-12.280 12.280-12.280 32.190 0 44.480l22.240 22.240c12.280 12.280 32.200 12.280 44.480 0L176 322.720l100.070 100.070c12.280 12.280 32.200 12.280 44.480 0l22.240-22.240c12.280-12.280 12.280-32.190 0-44.480L242.720 256z"/></svg> Cancel Estimate</div>
<div class="di" style="top:330.00px"><svg viewBox="0 0 448 512" style="width:12.250px"><path d="M320 448v40c0 13.255-10.745 24-24 24H24c-13.255 0-24-10.745-24-24V120c0-13.255 10.745-24 24-24h72v296c0 30.879 25.121 56 56 56h168zm0-344V0H152c-13.255 0-24 10.745-24 24v368c0 13.255 10.745 24 24 24h272c13.255 0 24-10.745 24-24V128H344c-13.200 0-24-10.800-24-24zm120.971-31.029L375.029 7.029A24 24 0 0 0 358.059 0H352v96h96v-6.059a24 24 0 0 0-7.029-16.970z"/></svg> Create Duplicate</div>
</div>
<!--OVERLAY-->
<div id="fab"><svg viewBox="0 0 60 60" width="60" height="60"><polygon points="14.300,39.900 14.300,20.200 29.800,11.700 43.200,19.400 43.200,25.400 30.200,32.400 30.200,27.600 38.100,23.300 38.100,22.300 29.800,17.600 19.200,23.300 19.200,42.600" fill="#343434"/><polygon points="22,25.300 26.700,22.800 26.700,41 29.800,42.800 41.200,36.200 41.200,32.500 38.500,31 43,28.600 46,30.300 46,38.300 29.800,47.700 22,43.400" fill="#f4692a"/></svg></div>
<div class="ov" style="left:77px;width:49px">Stop</div>
<div class="ov" style="left:136px;width:100px">Discard</div>
<div class="ov" style="left:246px;width:38px;border:1px solid #dcdcdc;box-shadow:none"><svg viewBox="0 0 24 24" style="position:absolute;left:7px;top:10px;width:22px;height:22px" fill="none" stroke="#000" stroke-width="1.700" stroke-linecap="round" stroke-linejoin="round"><path d="M21 7.500H3.500M8 3L3.500 7.500 8 12M3 16.500h17.500M16 12l4.500 4.500L16 21"/></svg></div>
<div id="cnt">3</div>
</body>
</html>
